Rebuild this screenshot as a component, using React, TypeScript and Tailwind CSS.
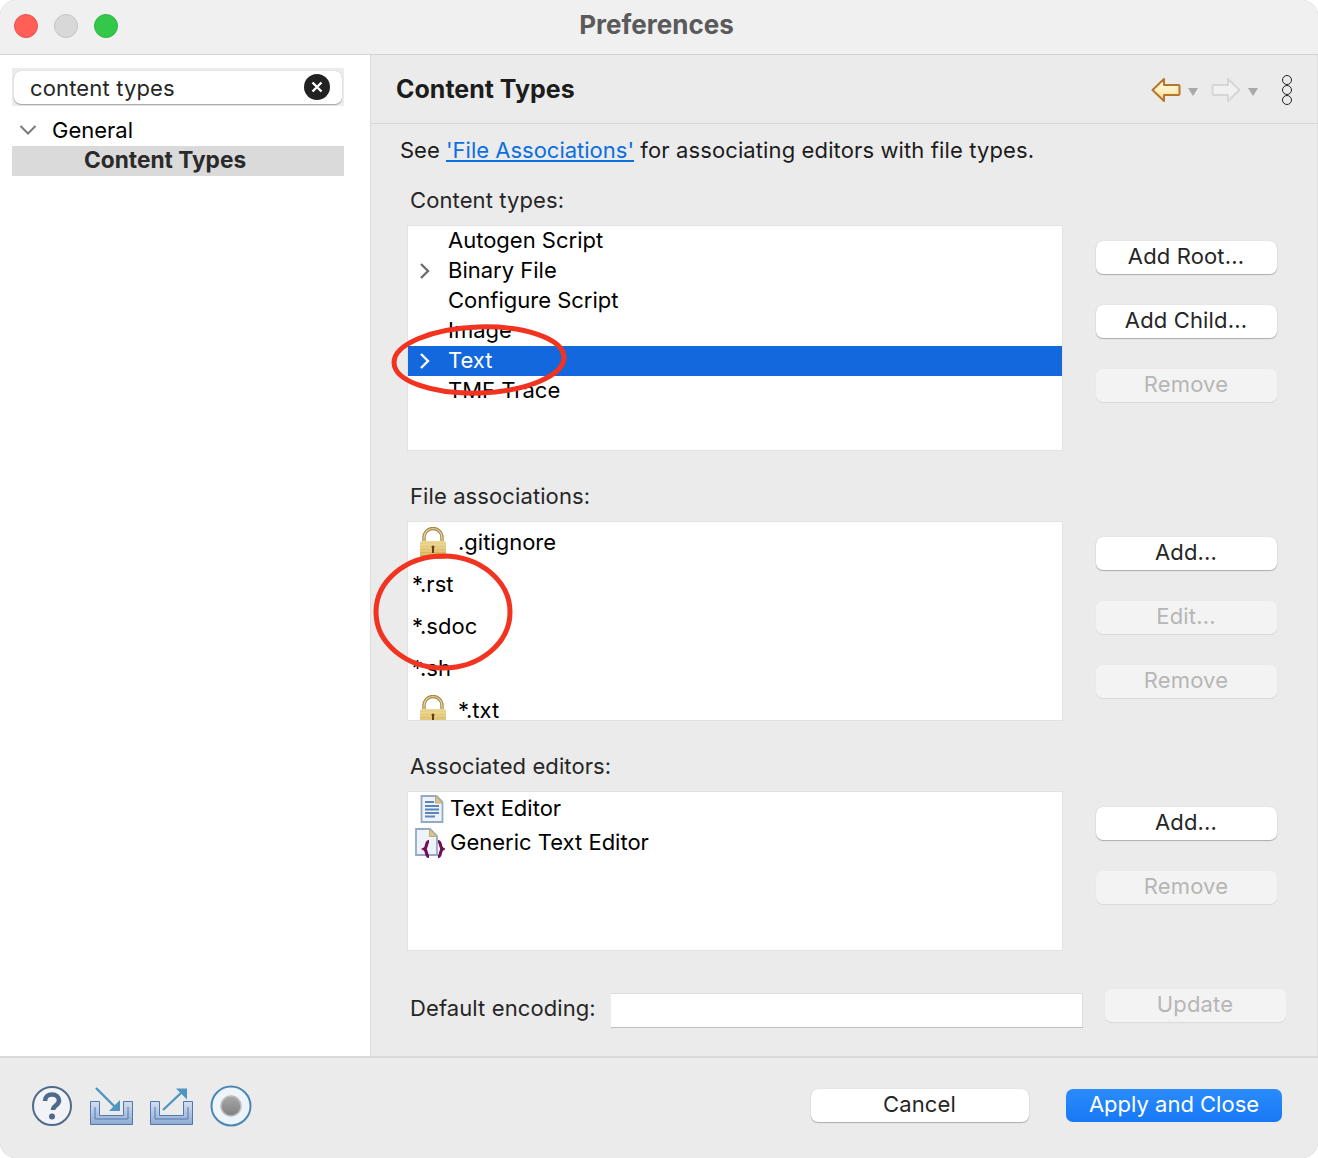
import React from "react";

const font = { fontFamily: "Inter, 'Noto Sans', sans-serif" };

function Btn({ label, disabled, className = "" }: { label: string; disabled?: boolean; className?: string }) {
  return (
    <div
      className={
        "flex h-[33px] w-[181px] items-center justify-center rounded-[7px] pb-[3px] pr-[1px] text-[22px] leading-none tracking-[0.15px] " +
        (disabled
          ? "bg-[#f3f3f3] text-[#b6b6b6] shadow-[0_1px_1px_rgba(0,0,0,0.08)] "
          : "bg-white text-[#262626] shadow-[0_0_1px_rgba(0,0,0,0.2),0_1px_1px_rgba(0,0,0,0.25)] ") +
        className
      }
    >
      {label}
    </div>
  );
}

function Lock({ id }: { id: string }) {
  return (
    <svg width="26" height="32" viewBox="0 0 26 32" className="block">
      <defs>
        <linearGradient id={id} x1="0" y1="0" x2="0" y2="1">
          <stop offset="0" stopColor="#ecd894" />
          <stop offset="0.55" stopColor="#dcbb62" />
          <stop offset="1" stopColor="#c49c40" />
        </linearGradient>
      </defs>
      <path d="M4 15V10.500a9 9 0 0 1 18 0V15" fill="none" stroke="#a8873f" strokeWidth="3.400" />
      <path d="M4 15V10.500a9 9 0 0 1 18 0V15" fill="none" stroke="#e6d8a8" strokeWidth="1.200" />
      <rect x="0" y="14" width="26" height="18" rx="2" fill={`url(#${id})`} />
      <path d="M0 18h26M0 21h26M0 24h26M0 27h26M0 30h26" stroke="#f3e4ae" strokeWidth="1" opacity="0.65" />
      <circle cx="13" cy="20" r="1.500" fill="#5b4314" />
      <rect x="12" y="20" width="2" height="6" fill="#5b4314" />
    </svg>
  );
}

function ChevronRight({ color = "#6e6e6e" }: { color?: string }) {
  return (
    <svg width="12" height="18" viewBox="0 0 12 18" className="block">
      <path d="M2 2l7 7-7 7" fill="none" stroke={color} strokeWidth="2.400" />
    </svg>
  );
}

function TreeRow({ label, chevron, selected }: { label: string; chevron?: boolean; selected?: boolean }) {
  return (
    <div className={"flex h-[30px] shrink-0 items-center " + (selected ? "bg-[#1268dc] text-white" : "text-black")}>
      <div className="flex w-[40px] justify-end pr-[17px]">
        {chevron && <ChevronRight color={selected ? "#ffffff" : "#6e6e6e"} />}
      </div>
      <span className="pb-[2px]">{label}</span>
    </div>
  );
}

function AssocRow({ label, lock, indent, id }: { label: string; lock?: boolean; indent?: string; id?: string }) {
  return (
    <div className="flex h-[42px] shrink-0 items-center text-black">
      {lock ? (
        <div className="ml-[12px] mr-[12px] w-[26px]">
          <Lock id={id ?? "lk"} />
        </div>
      ) : null}
      <span className={"pb-[2px] " + (indent ?? "")}>{label}</span>
    </div>
  );
}

function Section({
  title,
  listClass,
  list,
  buttons,
}: {
  title: string;
  listClass: string;
  list: React.ReactNode;
  buttons: React.ReactNode;
}) {
  return (
    <div>
      <div className="mb-[10px] ml-[39px] flex h-[30px] items-center tracking-[0.1px] text-[#262626]">{title}</div>
      <div className="ml-[36px] flex">
        <div className={"flex w-[656px] flex-col overflow-hidden border border-[#e2e2e2] bg-white " + listClass}>{list}</div>
        <div className="ml-[33px] flex flex-col gap-[31px] pt-[16px]">{buttons}</div>
      </div>
    </div>
  );
}

function ArrowBack() {
  return (
    <svg width="30" height="26" viewBox="0 0 30 26" className="block">
      <defs>
        <linearGradient id="ab" x1="0" y1="0" x2="0" y2="1">
          <stop offset="0" stopColor="#fffdf0" />
          <stop offset="0.55" stopColor="#ffeebc" />
          <stop offset="1" stopColor="#f8d88a" />
        </linearGradient>
      </defs>
      <path d="M1.500 13 13 2v6h14.500a1.500 1.500 0 0 1 1 1v8a1.500 1.500 0 0 1-1 1H13v6z" fill="url(#ab)" stroke="#b5752a" strokeWidth="2" strokeLinejoin="round" />
    </svg>
  );
}

function ArrowForward() {
  return (
    <svg width="30" height="26" viewBox="0 0 30 26" className="block">
      <path d="M28.500 13 17 2v6H2.500a1.500 1.500 0 0 0-1 1v8a1.500 1.500 0 0 0 1 1H17v6z" fill="#f1f1f1" stroke="#d6d6d6" strokeWidth="2" strokeLinejoin="round" />
    </svg>
  );
}

function Caret() {
  return (
    <svg width="10" height="8" viewBox="0 0 10 8" className="block">
      <path d="M0 0h10L5 8z" fill="#a8a8a8" />
    </svg>
  );
}

function TextDoc() {
  return (
    <svg width="24" height="28" viewBox="0 0 24 28" className="block">
      <path d="M1.500 1h15l6 6v20h-21z" fill="#eef3f9" stroke="#93a9c4" strokeWidth="1.800" />
      <path d="M15.500 1v7h7z" fill="#d9c48c" stroke="#c0ad76" />
      <path d="M5 7h9M5 11h14M5 14.500h14M5 18h14M5 21.500h10" stroke="#5a86bd" strokeWidth="2" />
    </svg>
  );
}

function GenericDoc() {
  return (
    <svg width="30" height="30" viewBox="0 0 30 30" className="block">
      <path d="M1 1h14l7 7v19H1z" fill="#eef3f9" stroke="#93a9c4" strokeWidth="1.800" />
      <path d="M14.500 1v7.500H22z" fill="#d9c48c" stroke="#c0ad76" />
      <path d="M14 13.500c-3.500 0-1.500 6-4.500 7.500 3 1.500 1 7.500 4.500 7.500M23 13.500c3.500 0 1.500 6 4.500 7.500-3 1.500-1 7.500-4.500 7.500" fill="none" stroke="#70105a" strokeWidth="3.200" />
    </svg>
  );
}

function Help() {
  return (
    <svg width="42" height="42" viewBox="0 0 42 42" className="block">
      <circle cx="21" cy="21" r="19" fill="#f1f3f6" stroke="#4f6b8c" strokeWidth="2" />
      <path d="M14 16c0-4 3-6.500 7-6.500s7 2.500 7 6c0 5-6 5-6 9.500" fill="none" stroke="#4f6b8c" strokeWidth="4.600" />
      <circle cx="21" cy="31.500" r="3" fill="#4f6b8c" />
    </svg>
  );
}

function Tray({ out }: { out?: boolean }) {
  const id = out ? "t2" : "t1";
  return (
    <svg width="43" height="38" viewBox="0 0 43 38" className="block">
      <defs>
        <linearGradient id={id} x1="0" y1="0" x2="0" y2="1">
          <stop offset="0" stopColor="#d3dff0" />
          <stop offset="1" stopColor="#8faad3" />
        </linearGradient>
      </defs>
      <path d="M.500 14.500h9v14h24v-14h9v23H.500z" fill={`url(#${id})`} stroke="#5278ad" />
      <path d="M5 20v12h33V20" fill="none" stroke="#5278ad" />
      {out ? (
        <>
          <path d="M13 23 31 6" stroke="#4e96bf" strokeWidth="2.400" />
          <path d="M26 1.500h11v11z" fill="#4e96bf" />
        </>
      ) : (
        <>
          <path d="M6 1 25 20" stroke="#4e96bf" strokeWidth="2.400" />
          <path d="M30 13v11H19z" fill="#4e96bf" />
        </>
      )}
    </svg>
  );
}

function Record() {
  return (
    <svg width="42" height="42" viewBox="0 0 42 42" className="block">
      <defs>
        <linearGradient id="rec" x1="0" y1="0" x2="0" y2="1">
          <stop offset="0" stopColor="#a9a9a9" />
          <stop offset="1" stopColor="#808080" />
        </linearGradient>
      </defs>
      <circle cx="21" cy="21" r="19.500" fill="#eef4fa" stroke="#4a86b4" strokeWidth="2" />
      <circle cx="21" cy="21" r="10" fill="url(#rec)" stroke="#bdbdbd" strokeWidth="1.500" />
    </svg>
  );
}

export default function App() {
  return (
    <div className="relative h-[1158px] w-[1318px] overflow-hidden bg-white text-[22px] leading-none" style={font}>
      <div className="flex h-full flex-col overflow-hidden rounded-[16px] bg-[#ebebeb] shadow-[inset_0_0_1px_rgba(0,0,0,0.45)]">
        <div className="relative flex h-[55px] shrink-0 items-center justify-center border-b border-[#d3d3d3] bg-[#f0f0f0] pr-[5px]">
          <div className="absolute left-[14px] top-[14px] flex gap-[16px]">
            <div className="h-[24px] w-[24px] rounded-full border border-[#e8504a] bg-[#ff5f57]" />
            <div className="h-[24px] w-[24px] rounded-full border border-[#c4c4c4] bg-[#d8d8d8]" />
            <div className="h-[24px] w-[24px] rounded-full border border-[#2ab43f] bg-[#34c84a]" />
          </div>
          <span className="pb-[4px] text-[26px] font-bold text-[#5a5a5a]">Preferences</span>
        </div>

        <div className="flex min-h-0 flex-1">
          <div className="w-[371px] shrink-0 border-r border-[#dcdcdc] bg-white pl-[12px] pt-[13px]">
            <div className="flex h-[38px] w-[332px] items-center bg-[#ececec] px-[2px]">
              <div className="flex h-[33px] w-full items-center justify-between rounded-[7px] bg-white pl-[16px] pr-[12px] text-[#262626] shadow-[0_0_1px_rgba(0,0,0,0.25),0_1px_1px_rgba(0,0,0,0.28)]">
                <span className="pt-[1px] tracking-[0.15px]">content types</span>
                <svg width="26" height="26" viewBox="0 0 26 26" className="block">
                  <circle cx="13" cy="13" r="13" fill="#222222" />
                  <path d="M8.500 8.500l9 9M17.500 8.500l-9 9" stroke="#ffffff" strokeWidth="2.400" />
                </svg>
              </div>
            </div>
            <div className="flex h-[40px] items-center pt-[7px] text-black">
              <svg width="18" height="12" viewBox="0 0 18 12" className="ml-[7px] mr-[15px] block">
                <path d="M1.500 2 9 9.500 16.500 2" fill="none" stroke="#7a7a7a" strokeWidth="2" />
              </svg>
              General
            </div>
            <div className="flex h-[30px] w-[332px] items-center bg-[#dadada] pb-[2px] pl-[72px] text-[22.7px] font-bold text-[#2a2a2a]">Content Types</div>
          </div>

          <div className="min-w-0 flex-1">
            <div className="flex h-[69px] items-center justify-between border-b border-[#d6d6d6] pl-[25px] pr-[26px]">
              <span className="pt-[1px] text-[25px] font-bold text-[#1c1c1c]">Content Types</span>
              <div className="flex items-center pt-[2px]">
                <ArrowBack />
                <div className="ml-[7px] mr-[13px] mt-[3px]"><Caret /></div>
                <ArrowForward />
                <div className="ml-[7px] mr-[24px] mt-[3px]"><Caret /></div>
                <div className="flex flex-col">
                  <div className="h-[10px] w-[10px] rounded-full border-[1.5px] border-[#222222]" />
                  <div className="h-[10px] w-[10px] rounded-full border-[1.5px] border-[#222222]" />
                  <div className="h-[10px] w-[10px] rounded-full border-[1.5px] border-[#222222]" />
                </div>
              </div>
            </div>

            <div className="flex h-[52px] items-center pl-[29px] text-[#1c1c1c]">
              <span>See&nbsp;</span>
              <span className="text-[#0a6fe0] underline">'File Associations'</span>
              <span className="tracking-[0.12px]">&nbsp;for associating editors with file types.</span>
            </div>

            <div className="mt-[9px]">
              <Section
                title="Content types:"
                listClass="h-[226px]"
                list={
                  <>
                    <TreeRow label="Autogen Script" />
                    <TreeRow label="Binary File" chevron />
                    <TreeRow label="Configure Script" />
                    <TreeRow label="Image" />
                    <TreeRow label="Text" chevron selected />
                    <TreeRow label="TMF Trace" />
                  </>
                }
                buttons={
                  <>
                    <Btn label="Add Root..." />
                    <Btn label="Add Child..." />
                    <Btn label="Remove" disabled />
                  </>
                }
              />
            </div>

            <div className="mt-[30px]">
              <Section
                title="File associations:"
                listClass="h-[200px]"
                list={
                  <>
                    <AssocRow label=".gitignore" lock id="lk1" />
                    <AssocRow label="*.rst" indent="ml-[4px]" />
                    <AssocRow label="*.sdoc" indent="ml-[4px]" />
                    <AssocRow label="*.sh" indent="ml-[4px]" />
                    <AssocRow label="*.txt" lock id="lk2" />
                  </>
                }
                buttons={
                  <>
                    <Btn label="Add..." />
                    <Btn label="Edit..." disabled />
                    <Btn label="Remove" disabled />
                  </>
                }
              />
            </div>

            <div className="mt-[30px]">
              <Section
                title="Associated editors:"
                listClass="h-[160px]"
                list={
                  <>
                    <div className="flex h-[34px] shrink-0 items-center text-black">
                      <div className="ml-[12px] mr-[6px] w-[24px]"><TextDoc /></div>
                      <span className="pb-[2px]">Text Editor</span>
                    </div>
                    <div className="flex h-[34px] shrink-0 items-center text-black">
                      <div className="ml-[7px] mr-[5px] w-[30px]"><GenericDoc /></div>
                      <span className="pb-[2px]">Generic Text Editor</span>
                    </div>
                  </>
                }
                buttons={
                  <>
                    <Btn label="Add..." />
                    <Btn label="Remove" disabled />
                  </>
                }
              />
            </div>

            <div className="ml-[39px] mt-[38px] flex items-start">
              <span className="mr-[16px] flex h-[38px] w-[185px] items-center whitespace-nowrap tracking-[0.1px] text-[#262626]">Default encoding:</span>
              <div className="mt-[4px] h-[34px] w-[472px] border-t border-r border-[#dedede] bg-white shadow-[0_1px_0_#bdbdbd]" />
              <Btn label="Update" disabled className="ml-[22px]" />
            </div>
          </div>
        </div>

        <div className="flex h-[102px] shrink-0 items-center justify-between border-t-2 border-[#d9d9d9] bg-[#ebebeb] pl-[31px] pr-[36px]">
          <div className="flex items-center gap-[17px] pb-[4px]">
            <Help />
            <Tray />
            <Tray out />
            <Record />
          </div>
          <div className="flex items-center gap-[37px] pb-[6px]">
            <Btn label="Cancel" className="!w-[218px]" />
            <div className="flex h-[33px] w-[216px] items-center justify-center rounded-[7px] bg-gradient-to-b from-[#2a8cfb] to-[#1678f5] pb-[3px] text-white">Apply and Close</div>
          </div>
        </div>
      </div>

      <svg className="pointer-events-none absolute left-0 top-0" width="1318" height="1158" viewBox="0 0 1318 1158" fill="none">
        <ellipse cx="479" cy="360" rx="85" ry="33" transform="rotate(-2 479 360)" stroke="#f2331f" strokeWidth="5" />
        <ellipse cx="443" cy="612" rx="67" ry="56" stroke="#f2331f" strokeWidth="5" />
      </svg>
    </div>
  );
}
